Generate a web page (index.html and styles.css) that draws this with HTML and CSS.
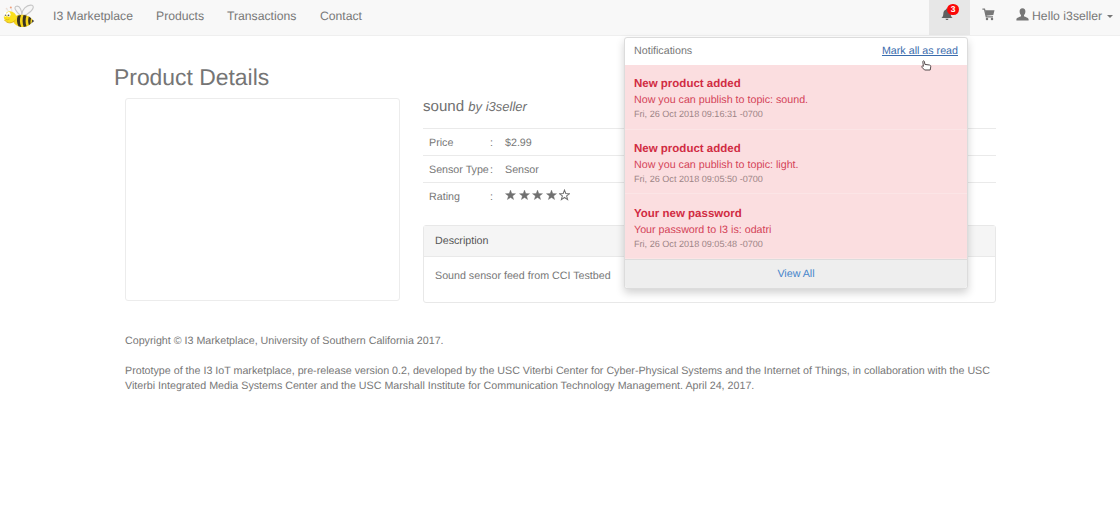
FILE: index.html
```html
<!DOCTYPE html>
<html lang="en">
<head>
<meta charset="utf-8">
<title>I3 Marketplace</title>
<link rel="stylesheet" href="styles.css">
</head>
<body>
<svg class="defs" width="0" height="0">
  <symbol id="star" viewBox="0 0 12 12"><path d="M6 .6 7.4 4.4 11.5 4.5 8.3 7 9.4 11 6 8.7 2.6 11 3.7 7 .5 4.5 4.6 4.4Z"/></symbol>
</svg>
<nav class="navbar">
  <a class="logo">
    <svg width="32" height="24" viewBox="0 0 32 24">
      <g fill="#f6f6f6" stroke="#c6c6c6" stroke-width="1.1">
        <path d="M18 12C12 7 10.500 3 13.500 2.200 17 1.400 19 7 19 12Z"/>
        <path d="M19 12C18 6 24 .2 29 1.300 33 3 27 10 19 12Z"/>
      </g>
      <path d="M6 8 4 5M9 7.500 8.500 4.500" stroke="#ddd" stroke-width=".8"/>
      <circle cx="3.600" cy="4.700" r=".9" fill="#eeddd2"/><circle cx="7.800" cy="3.500" r="1" fill="#f0a07a"/>
      <path d="M28.500 15 31.200 17 28.300 19.500Z" fill="#4d4737"/>
      <path d="M11 13C15 9.500 26 10 29 15.500 29.500 20 25 23.500 18 23 14 22.500 11 20 10 17Z" fill="#f6d51b"/>
      <path d="M14.800 11.700 18 11C16.500 15 16.500 19 18.300 23L15.500 22.300C13.700 19 13.500 15 14.800 11.700ZM20.500 10.900 23.500 11.500C22.300 15 22.300 19 23.500 22.300L20.700 23C19.300 19 19.300 14.500 20.500 10.900ZM25.800 12.500 28.200 14.300C27.400 16.500 27.400 18 27.600 19.700L25.900 21.200C24.900 18 24.900 15.500 25.800 12.500Z" fill="#393424"/>
      <ellipse cx="7" cy="13" rx="6.200" ry="5.800" fill="#fae01c"/>
      <path d="M1.500 16C4 19.500 9 20 12.500 16" fill="none" stroke="#dcb014" stroke-width="1"/>
      <ellipse cx="2.300" cy="10.300" rx="1.500" ry="2.500" fill="#fff"/><ellipse cx="5.700" cy="10.300" rx="1.900" ry="2.600" fill="#fff"/>
      <circle cx="2.500" cy="11.300" r=".8" fill="#666"/><circle cx="5.500" cy="11.300" r=".9" fill="#555"/>
      <path d="M2.500 15Q4.500 16.500 6.500 15" fill="none" stroke="#c9a31c" stroke-width=".6"/>
    </svg>
  </a>
  <a class="link brand">I3 Marketplace</a>
  <a class="link products">Products</a>
  <a class="link transactions">Transactions</a>
  <a class="link contact">Contact</a>
  <div class="tools">
    <a class="bell">
      <svg width="12" height="13" viewBox="0 0 12 13"><path d="M6 .5C6.700.500 7 1 7 1.600 9 2.200 9.600 4 9.700 6 9.800 8 10.300 8.900 11.600 10H.4C1.700 8.900 2.200 8 2.300 6 2.400 4 3 2.200 5 1.600 5 1 5.300.500 6 .5ZM4.500 10.700H7.500C7.300 12.400 4.700 12.400 4.500 10.700Z" fill="#606060"/></svg>
      <span class="badge">3</span>
    </a>
    <a class="cart">
      <svg width="13" height="13" viewBox="0 0 13 13"><path d="M.4 1.200H2.500L4.300 8.800H11" fill="none" stroke="#777" stroke-width="1.300"/><path d="M3 2.200H12.500L11.300 6.900 4.200 7.700Z" fill="#777"/><circle cx="5" cy="11" r="1.250" fill="#777"/><circle cx="10" cy="11" r="1.250" fill="#777"/></svg>
    </a>
    <a class="user">
      <svg width="13" height="13" viewBox="0 0 13 13"><path d="M6.500.3C8.500.300 9.500 1.700 9.400 3.700 9.300 5.300 8.700 6.400 8 7.100V8.300C9 9.200 12.600 9.500 12.600 11.300V12.500H.4V11.300C.4 9.500 4 9.200 5 8.300V7.100C4.300 6.400 3.700 5.300 3.600 3.700 3.500 1.700 4.500.300 6.500.300Z" fill="#777"/></svg>
      <span>Hello i3seller</span><i class="caret"></i>
    </a>
  </div>
</nav>

<section class="dropdown">
  <header class="drop-head"><span>Notifications</span><a>Mark all as read</a></header>
  <article class="note"><h4>New product added</h4><p>Now you can publish to topic: sound.</p><small>Fri, 26 Oct 2018 09:16:31 -0700</small></article>
  <article class="note"><h4>New product added</h4><p>Now you can publish to topic: light.</p><small>Fri, 26 Oct 2018 09:05:50 -0700</small></article>
  <article class="note"><h4>Your new password</h4><p>Your password to I3 is: odatri</p><small>Fri, 26 Oct 2018 09:05:48 -0700</small></article>
  <footer class="drop-foot">View All</footer>
  <svg class="pointer" width="11" height="12" viewBox="0 0 11 12"><path d="M2.400 6.300 1.800 1.700C1.700.700 3.200.500 3.400 1.500L3.900 4.400 8.500 5C9.600 5.200 9.900 5.900 9.700 7L9.200 10H3.600L.9 7.200C.4 6.300 1.500 5.600 2.400 6.300Z" fill="#fff" stroke="#554a4c" stroke-width="1"/></svg>
</section>

<main class="page">
  <h1>Product Details</h1>
  <div class="product">
    <div class="picture"></div>
    <div class="info">
      <h2>sound <em>by i3seller</em></h2>
      <div class="row"><span>Price</span><span>:</span><span>$2.99</span></div>
      <div class="row"><span>Sensor Type</span><span>:</span><span>Sensor</span></div>
      <div class="row"><span>Rating</span><span>:</span>
        <span class="stars">
          <svg class="star"><use href="#star"/></svg><svg class="star"><use href="#star"/></svg><svg class="star"><use href="#star"/></svg><svg class="star"><use href="#star"/></svg><svg class="star empty"><use href="#star"/></svg>
        </span>
      </div>
      <div class="panel">
        <div class="panel-head">Description</div>
        <div class="panel-body">Sound sensor feed from CCI Testbed</div>
      </div>
    </div>
  </div>
  <footer class="footer">
    <p>Copyright © I3 Marketplace, University of Southern California 2017.</p>
    <p>Prototype of the I3 IoT marketplace, pre-release version 0.2, developed by the USC Viterbi Center for Cyber-Physical Systems and the Internet of Things, in collaboration with the USC<br>Viterbi Integrated Media Systems Center and the USC Marshall Institute for Communication Technology Management. April 24, 2017.</p>
  </footer>
</main>
</body>
</html>
```
FILE: styles.css
```css
* { box-sizing: border-box; }
body {
  margin: 0;
  height: 529px;
  overflow: hidden;
  background: #fff;
  color: #777;
  font: 10.7px/15px "Liberation Sans", Arial, sans-serif;
  text-rendering: geometricPrecision;
}
h1, h2, h4, p { margin: 0; font-weight: normal; }
.defs { position: absolute; }

.navbar {
  display: flex;
  height: 36px;
  background: #f8f8f8;
  border-bottom: 1px solid #efefef;
  font-size: 12.2px;
  line-height: 32px;
}
.logo { width: 53px; padding: 4px 0 0 3px; line-height: 0; }
.brand { width: 103px; }
.products { width: 71px; }
.transactions { width: 93px; }
.tools { display: flex; margin-left: auto; }
.bell { position: relative; width: 41px; height: 35px; background: #e7e7e7; padding: 8px 0 0 12px; line-height: 0; }
.badge {
  position: absolute;
  left: 18px;
  top: 4px;
  width: 12px;
  height: 11px;
  border-radius: 6px;
  background: #fb0808;
  color: #fff;
  font: bold 8.5px/10px "Liberation Sans", Arial, sans-serif;
  text-align: center;
}
.cart { width: 46px; padding: 8px 0 0 12px; line-height: 0; }
.user { display: flex; width: 104px; }
.user svg { margin: 8px 3px 0 0; }
.user span { letter-spacing: .03px; }
.caret { margin: 15px 0 0 5px; width: 6px; height: 3px; border: 3px solid transparent; border-top-color: #777; border-bottom: 0; }

.dropdown {
  position: absolute;
  left: 624px;
  top: 37px;
  width: 344px;
  height: 252px;
  border: 1px solid #dcdcdc;
  border-radius: 3px;
  background: #fff;
  box-shadow: 0 4px 8px rgba(0, 0, 0, .18);
}
.drop-head { display: flex; justify-content: space-between; height: 27px; padding: 0 9px; line-height: 26px; }
.drop-head a { color: #3a6cad; text-decoration: underline; }
.note { height: 64.700px; padding: 11.300px 9px 0; background: #fbdee0; border-bottom: 1px solid #fbe5e6; }
.note h4 { font-size: 11.500px; font-weight: bold; line-height: 17px; color: #d12c43; }
.note p { font-size: 10.700px; line-height: 14px; color: #d44358; }
.note small { display: block; font-size: 9.100px; line-height: 15px; color: #9d8587; }
.drop-foot { height: 29px; background: #eee; border-top: 1px solid #dcdcdc; border-radius: 0 0 3px 3px; line-height: 28px; text-align: center; color: #4484ca; }
.pointer { position: absolute; left: 296px; top: 22px; }

.page { width: 882px; margin-left: 114px; }
h1 { font-size: 22.900px; line-height: 26px; padding-top: 28px; height: 61px; color: #757575; }
.product { display: flex; gap: 23px; padding-left: 11px; }
.picture { width: 275px; height: 203px; margin-top: 1px; border: 1px solid #ececec; border-radius: 3px; }
.info { width: 573px; }
h2 { height: 31px; font-size: 15.100px; line-height: 19px; color: #707070; }
h2 em { font-size: 13px; }
.row { display: grid; grid-template-columns: 61px 15px 1fr; height: 27px; padding-left: 6px; border-top: 1px solid #eaeaea; line-height: 28px; }
.stars { display: flex; gap: 2.600px; padding-top: 6px; }
.star { width: 11px; height: 12px; fill: #707070; stroke: #707070; stroke-width: .4; }
.empty { fill: none; stroke-width: 1.100; }
.panel { margin-top: 16px; height: 78px; border: 1px solid #e8e8e8; border-radius: 3px; }
.panel-head { height: 31px; padding-left: 11px; background: #f5f5f5; border-bottom: 1px solid #e9e9e9; line-height: 30px; color: #555; }
.panel-body { padding: 12px 11px; }
.footer { padding: 31px 0 0 11px; white-space: nowrap; }
.footer p + p { margin-top: 15px; }
```
